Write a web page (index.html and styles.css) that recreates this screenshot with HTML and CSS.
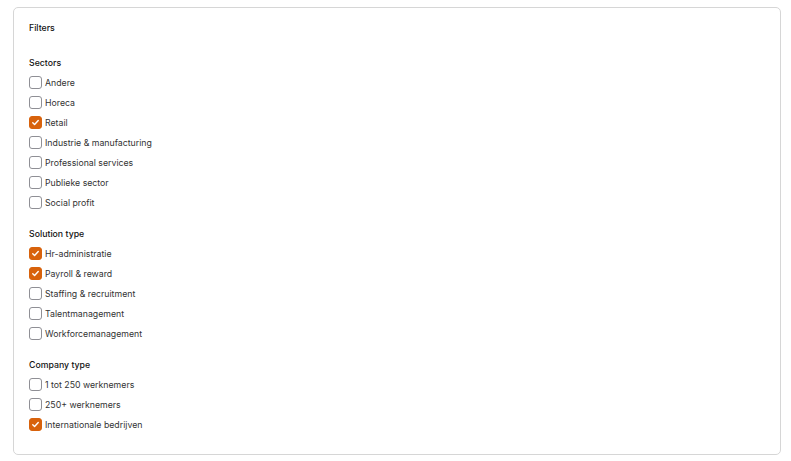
FILE: index.html
```html
<!DOCTYPE html>
<html>
<head>
<meta charset="utf-8">
<link rel="stylesheet" href="styles.css">
</head>
<body>
<div class="card">
  <div class="title">Filters</div>
  <div class="groups">
    <div class="group">
      <div class="heading">Sectors</div>
      <label class="row"><span class="box"></span>Andere</label>
      <label class="row"><span class="box"></span>Horeca</label>
      <label class="row"><span class="box on"><svg viewBox="0 0 12 12"><path d="M3 6.2l2 2 4-4.4"/></svg></span>Retail</label>
      <label class="row"><span class="box"></span>Industrie &amp; manufacturing</label>
      <label class="row"><span class="box"></span>Professional services</label>
      <label class="row"><span class="box"></span>Publieke sector</label>
      <label class="row"><span class="box"></span>Social profit</label>
    </div>
    <div class="group">
      <div class="heading">Solution type</div>
      <label class="row"><span class="box on"><svg viewBox="0 0 12 12"><path d="M3 6.2l2 2 4-4.4"/></svg></span>Hr-administratie</label>
      <label class="row"><span class="box on"><svg viewBox="0 0 12 12"><path d="M3 6.2l2 2 4-4.4"/></svg></span>Payroll &amp; reward</label>
      <label class="row"><span class="box"></span>Staffing &amp; recruitment</label>
      <label class="row"><span class="box"></span>Talentmanagement</label>
      <label class="row"><span class="box"></span>Workforcemanagement</label>
    </div>
    <div class="group">
      <div class="heading">Company type</div>
      <label class="row"><span class="box"></span>1 tot 250 werknemers</label>
      <label class="row"><span class="box"></span>250+ werknemers</label>
      <label class="row"><span class="box on"><svg viewBox="0 0 12 12"><path d="M3 6.2l2 2 4-4.4"/></svg></span>Internationale bedrijven</label>
    </div>
  </div>
</div>
</body>
</html>
```
FILE: styles.css
```css
html, body {
  margin: 0;
  padding: 0;
  background: #ffffff;
}
body {
  font-family: Inter, "Noto Sans", sans-serif;
  font-size: 8.75px;
  color: #2b2b2b;
}
.card {
  box-sizing: border-box;
  margin: 7px 0 0 13px;
  width: 768px;
  border: 1px solid #d6d6d6;
  border-radius: 5px;
  padding: 10px 15px 19px 15px;
}
.title {
  line-height: 20px;
  font-weight: 500;
  color: #111111;
}
.groups {
  margin-top: 15px;
  display: flex;
  flex-direction: column;
  gap: 11px;
}
.group {
  display: flex;
  flex-direction: column;
}
.heading {
  box-sizing: border-box;
  height: 20px;
  padding-top: 1px;
  line-height: 19px;
  font-weight: 500;
  color: #111111;
}
.row {
  box-sizing: border-box;
  display: flex;
  align-items: center;
  height: 20px;
  padding-bottom: 1px;
  gap: 3px;
  color: #333333;
}
.box {
  width: 11px;
  height: 11px;
  border: 1px solid #8f8f95;
  border-radius: 3px;
  display: flex;
  align-items: center;
  justify-content: center;
  flex: none;
}
.box.on {
  background: #d8620c;
  border-color: #d8620c;
}
.box svg {
  width: 11px;
  height: 11px;
}
.box svg path {
  fill: none;
  stroke: #ffffff;
  stroke-width: 1.5;
  stroke-linecap: round;
  stroke-linejoin: round;
}
```
